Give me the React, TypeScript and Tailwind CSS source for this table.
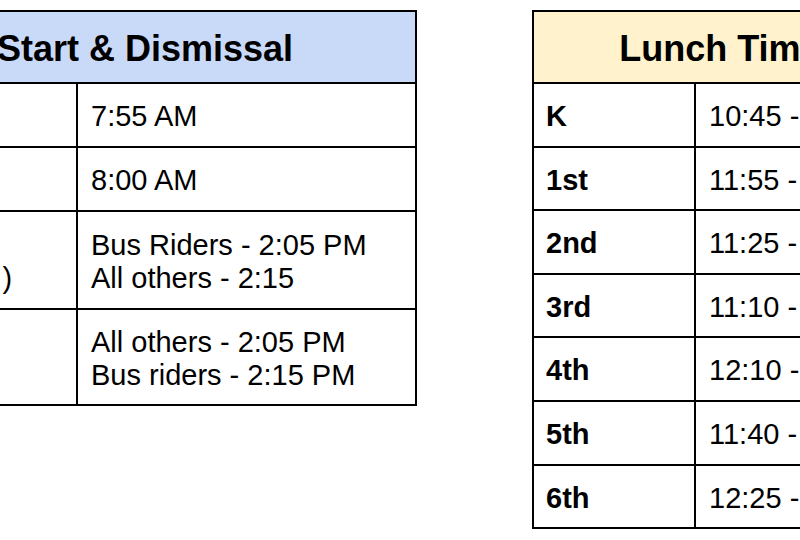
import React from 'react';

interface Row {
  label: React.ReactNode;
  value: string[];
  height: string;
}

const schedule: Row[] = [
  { label: 'Arrival', value: ['7:55 AM'], height: 'h-[64px]' },
  { label: 'Tardy', value: ['8:00 AM'], height: 'h-[64px]' },
  {
    label: (
      <>
        Dismissal
        <br />
        (Monday-Thursday )
      </>
    ),
    value: ['Bus Riders - 2:05 PM', 'All others - 2:15'],
    height: 'h-[98px]',
  },
  { label: 'Friday', value: ['All others - 2:05 PM', 'Bus riders - 2:15 PM'], height: 'h-[96px]' },
];

const lunch = [
  { label: 'K', value: '10:45 - 11:15' },
  { label: '1st', value: '11:55 - 12:25' },
  { label: '2nd', value: '11:25 - 11:55' },
  { label: '3rd', value: '11:10 - 11:40' },
  { label: '4th', value: '12:10 - 12:40' },
  { label: '5th', value: '11:40 - 12:10' },
  { label: '6th', value: '12:25 - 12:55' },
];

const App: React.FC = () => {
  return (
    <div
      className="w-[800px] h-[540px] overflow-hidden bg-white text-black"
      style={{ fontFamily: '"Liberation Sans", Arial, sans-serif' }}
    >
      <div className="flex items-start pt-[10px]">
        {/* Start & Dismissal */}
        <div className="shrink-0 w-[674px] ml-[-257px] border-2 border-black">
          <div className="h-[70px] pt-[3px] bg-[#c9daf8] flex items-center justify-center text-[36px] font-bold whitespace-nowrap">
            School Start &amp; Dismissal
          </div>
          {schedule.map((row, i) => (
            <div key={i} className={`flex border-t-2 border-black ${row.height}`}>
              <div className="w-[331px] shrink-0 pl-[6px] pt-[3px] flex items-center text-[29px] leading-[33px] whitespace-pre">
                <span>{row.label}</span>
              </div>
              <div className="flex-1 border-l-2 border-black pl-[13px] pt-[3px] flex flex-col justify-center text-[29px] leading-[33px]">
                {row.value.map((v) => (
                  <span key={v}>{v}</span>
                ))}
              </div>
            </div>
          ))}
        </div>

        {/* Lunch Times */}
        <div className="shrink-0 w-[396px] ml-[115px] border-2 border-black">
          <div className="h-[70px] pt-[3px] bg-[#fff2cc] flex items-center justify-center text-[36px] font-bold whitespace-nowrap">
            Lunch Times
          </div>
          {lunch.map((row) => (
            <div key={row.label} className="flex border-t-2 border-black h-[63.6px]">
              <div className="w-[160px] shrink-0 pl-[12px] pt-[4px] flex items-center text-[29px] font-bold">
                {row.label}
              </div>
              <div className="flex-1 border-l-2 border-black pl-[13px] pt-[4px] flex items-center text-[29px] whitespace-nowrap">
                {row.value}
              </div>
            </div>
          ))}
        </div>
      </div>
    </div>
  );
};

export default App;
